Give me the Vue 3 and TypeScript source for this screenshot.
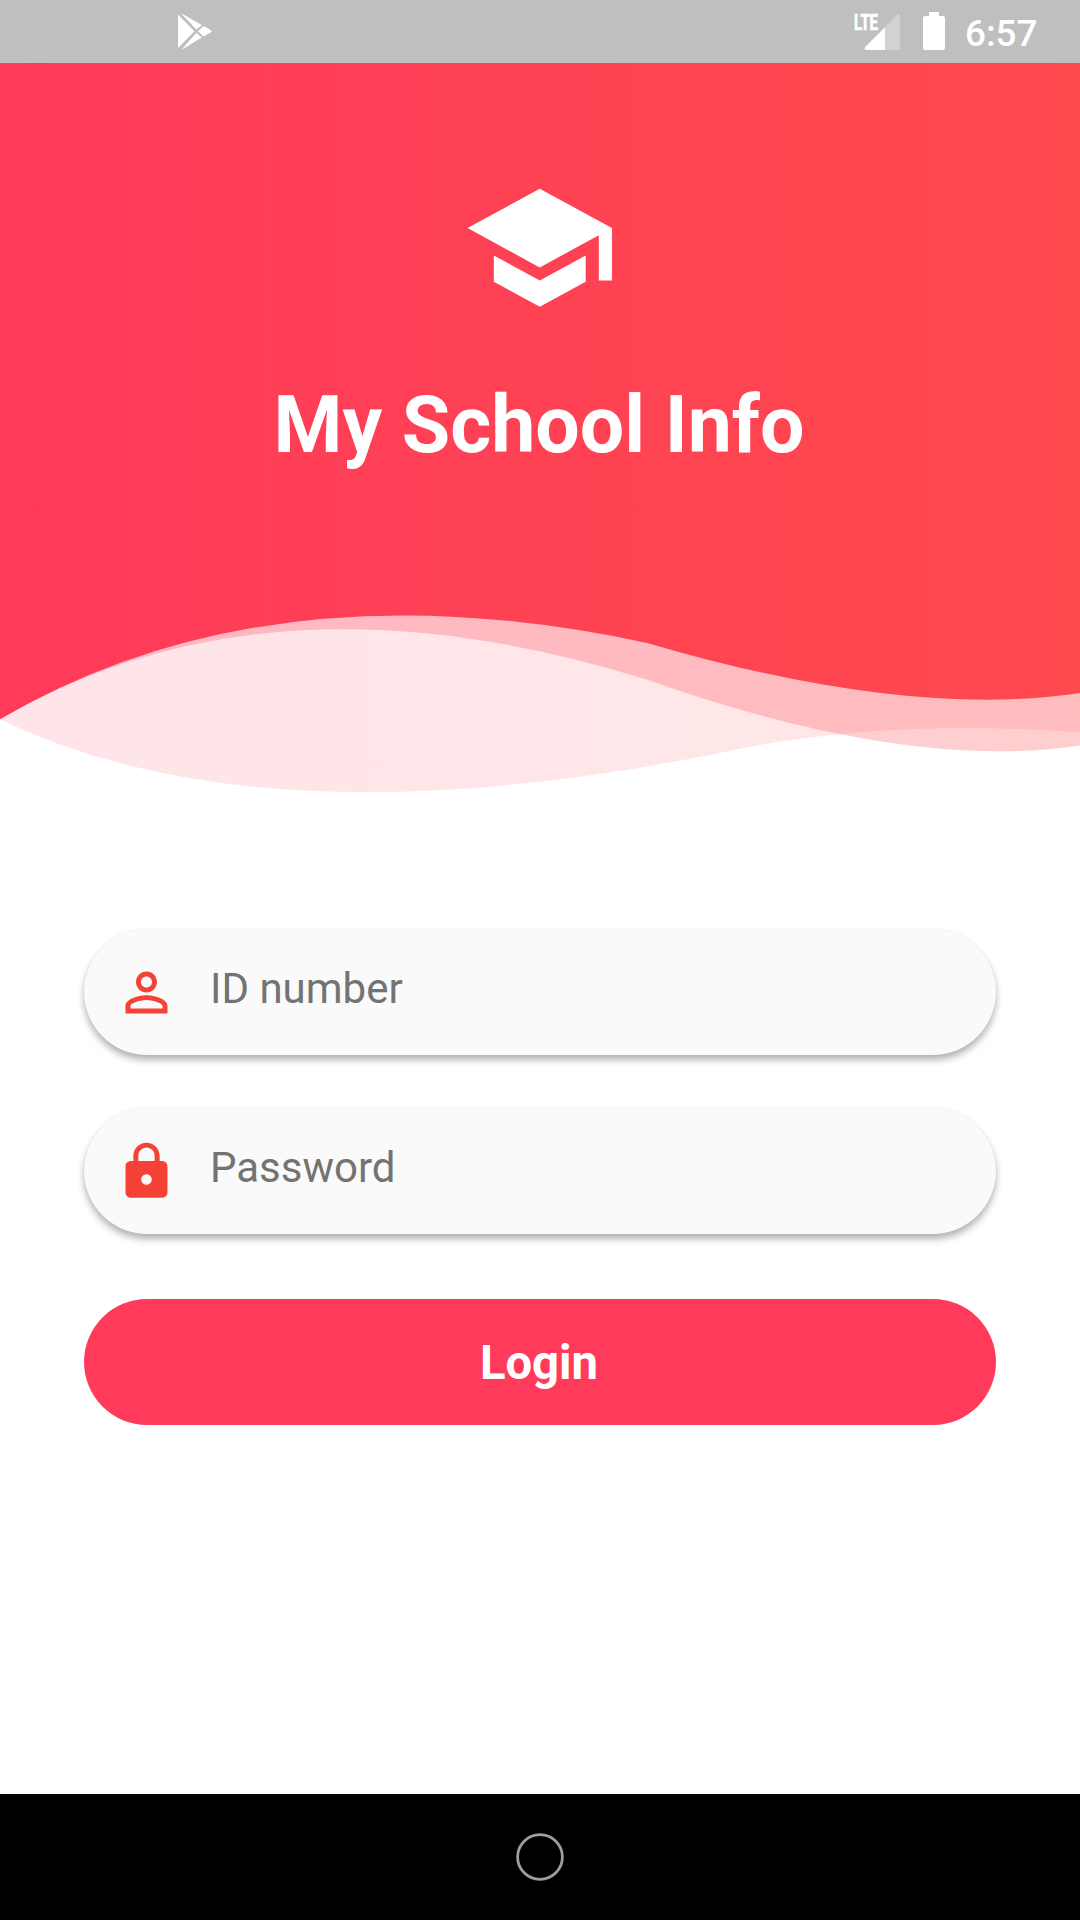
<script setup lang="ts">
import { ref } from 'vue'

interface Field {
  key: string
  type: string
  placeholder: string
  icon: string
}

const fields: Field[] = [
  {
    key: 'id',
    type: 'text',
    placeholder: 'ID number',
    icon: 'M12 5.9c1.16 0 2.1.94 2.1 2.1s-.94 2.1-2.1 2.1S9.9 9.16 9.9 8s.94-2.1 2.1-2.1m0 9c2.97 0 6.1 1.46 6.1 2.1v1.1H5.9V17c0-.64 3.13-2.1 6.1-2.1M12 4C9.79 4 8 5.79 8 8s1.79 4 4 4 4-1.79 4-4-1.79-4-4-4zm0 9c-2.67 0-8 1.34-8 4v3h16v-3c0-2.66-5.33-4-8-4z',
  },
  {
    key: 'password',
    type: 'password',
    placeholder: 'Password',
    icon: 'M18 8h-1V6c0-2.76-2.24-5-5-5S7 3.24 7 6v2H6c-1.1 0-2 .9-2 2v10c0 1.1.9 2 2 2h12c1.1 0 2-.9 2-2V10c0-1.1-.9-2-2-2zm-6 9c-1.1 0-2-.9-2-2s.9-2 2-2 2 .9 2 2-.9 2-2 2zm3.1-9H8.9V6c0-1.71 1.39-3.1 3.1-3.1s3.1 1.39 3.1 3.1v2z',
  },
]

const values = ref<Record<string, string>>({ id: '', password: '' })
</script>

<template>
  <div class="screen">
    <header class="status">
      <svg class="play" viewBox="0 0 36 38" width="36" height="38">
        <path d="M1 1.5V35L17.4 18.2z" />
        <path d="M3.8 0L24.8 11.9 19.4 16.6z" />
        <path d="M4.2 37L24.8 24.6 19.4 19.8z" />
        <path d="M26.6 13L34 17.2q1.4 1 0 2L26.6 23.6 20.9 18.2z" />
      </svg>
      <div class="indicators">
        <svg class="signal" viewBox="-4 -12 51 50" width="51" height="50">
          <path d="M31 15.2L43.4 2.6Q46 .8 46 4V36q0 2-2 2H31z" opacity="0.3" />
          <path d="M31 15.2V38H12.6q-3.4-.4-1.4-3z" />
          <text x="0" y="18" textLength="24" lengthAdjust="spacingAndGlyphs">LTE</text>
        </svg>
        <svg class="battery" viewBox="0 0 22 38" width="22" height="38">
          <path d="M6 0H16V4H20q2 0 2 2V36q0 2-2 2H2q-2 0-2-2V6q0-2 2-2H6z" />
        </svg>
        <span class="time">6:57</span>
      </div>
    </header>

    <section class="hero">
      <svg class="waves" viewBox="0 0 1080 787.5" width="1080" height="787.5">
        <defs>
          <linearGradient id="blush" x1="0" x2="1" y1="0" y2="0">
            <stop offset="0" stop-color="#ff3a5a" />
            <stop offset="1" stop-color="#fe494d" />
          </linearGradient>
        </defs>
        <path
          d="M0 0V656.25Q270 787.5 756 682.5Q907.2 656.25 1080 669.375V0z"
          fill="url(#blush)"
          fill-opacity="0.1333"
        />
        <path
          d="M0 0V656.25Q270 498.75 648 616.875Q907.2 708.75 1080 682.5V0z"
          fill="url(#blush)"
          fill-opacity="0.2667"
        />
        <path
          d="M0 0V656.25Q270 498.75 648 580.125Q907.2 656.25 1080 630V0z"
          fill="url(#blush)"
        />
      </svg>
      <div class="brand">
        <svg class="cap" viewBox="0 0 24 24" width="157.5" height="157.5">
          <path
            d="M5 13.18v4L12 21l7-3.82v-4L12 17l-7-3.82zM12 3L1 9l11 6 9-4.91V17h2V9L12 3z"
          />
        </svg>
        <h1>My School Info</h1>
      </div>
    </section>

    <form class="form" @submit.prevent>
      <label v-for="f in fields" :key="f.key" class="field">
        <svg viewBox="0 0 24 24" width="63" height="63"><path :d="f.icon" /></svg>
        <input v-model="values[f.key]" :type="f.type" :placeholder="f.placeholder" />
      </label>
      <button class="login" type="submit">Login</button>
    </form>

    <footer class="nav">
      <svg viewBox="0 0 48 48" width="48" height="48">
        <circle cx="24" cy="24" r="22.4" />
      </svg>
    </footer>
  </div>
</template>

<style>
body {
  margin: 0;
  background: #fff;
}
</style>

<style scoped>
.screen {
  width: 1080px;
  height: 1920px;
  display: flex;
  flex-direction: column;
  overflow: hidden;
  background: #fff;
  font-family: Roboto, 'Liberation Sans', sans-serif;
}
.status {
  flex: none;
  box-sizing: border-box;
  height: 63px;
  padding: 0 41px 0 177px;
  display: flex;
  justify-content: space-between;
  align-items: flex-start;
  background: #bfbfbf;
}
.status svg {
  display: block;
  fill: #fff;
}
.play {
  margin-top: 12.5px;
}
.signal text {
  font-size: 22px;
  font-weight: 700;
  stroke: #fff;
  stroke-width: 0.7px;
}
.indicators {
  display: flex;
  align-items: flex-start;
}
.battery {
  margin: 12px 0 0 22px;
}
.time {
  margin: 12px 0 0 20px;
  width: 74px;
  color: #fff;
  font-size: 36.75px;
  font-weight: 500;
  line-height: 43px;
  white-space: nowrap;
}
.hero {
  flex: none;
  height: 787.5px;
  display: grid;
}
.waves,
.brand {
  grid-area: 1 / 1;
}
.waves {
  display: block;
}
.brand {
  display: flex;
  flex-direction: column;
  align-items: center;
  padding-top: 105.5px;
  color: #fff;
  z-index: 1;
}
.cap {
  display: block;
  fill: #fff;
}
h1 {
  margin: 53px 2px 0 0;
  font-size: 78.75px;
  line-height: 92px;
  font-weight: 700;
}
.form {
  flex: 1;
  display: flex;
  flex-direction: column;
  padding: 78.25px 84px 0;
}
.field {
  box-sizing: border-box;
  height: 126px;
  margin-bottom: 53px;
  padding: 1px 31.5px 0 30.5px;
  display: flex;
  align-items: center;
  border-radius: 63px;
  background: #fafafa;
  box-shadow: 0 5px 7px rgba(0, 0, 0, 0.3), 0 0 2px rgba(0, 0, 0, 0.05);
}
.field svg {
  flex: none;
  fill: #f44336;
}
.field input {
  flex: 1;
  min-width: 0;
  height: 50px;
  margin: 0 0 7px 32.5px;
  padding: 0;
  border: 0;
  outline: 0;
  background: none;
  font: 400 42px/50px Roboto, 'Liberation Sans', sans-serif;
  color: #212121;
}
.field input::placeholder {
  color: #737373;
  opacity: 1;
}
.login {
  height: 126px;
  margin-top: 12.5px;
  padding: 2px 2px 0 0;
  border: 0;
  border-radius: 63px;
  background: #ff3a5a;
  color: #fff;
  font: 700 47.25px/56px Roboto, 'Liberation Sans', sans-serif;
}
.nav {
  flex: none;
  box-sizing: border-box;
  height: 126px;
  padding: 0 1px 1px 0;
  display: flex;
  align-items: center;
  justify-content: center;
  background: #000;
}
.nav circle {
  fill: none;
  stroke: #9e9e9e;
  stroke-width: 2.8;
}
</style>
